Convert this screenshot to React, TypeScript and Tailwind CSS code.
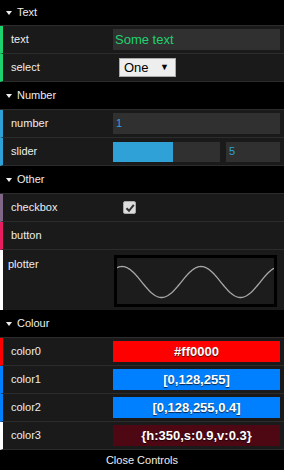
import React from "react";

const font = { fontFamily: '"Liberation Sans", Arial, sans-serif' };

const Header = ({ title, first }: { title: string; first?: boolean }) => (
  <div
    className={`flex items-center bg-black border-b border-[#2c2c2c] text-[11px] text-[#eeeeee] ${
      first ? "h-[26px]" : "h-[28px]"
    }`}
  >
    <span className="ml-[6px] mr-[5px] w-0 h-0 border-l-[3px] border-r-[3px] border-t-[4px] border-l-transparent border-r-transparent border-t-[#eeeeee]" />
    <span>{title}</span>
  </div>
);

const Row = ({
  label,
  border,
  children,
}: {
  label: string;
  border: string;
  children?: React.ReactNode;
}) => (
  <div
    className={`flex items-center h-[28px] bg-[#1a1a1a] border-b border-[#2c2c2c] border-l-[3px] ${border}`}
  >
    <div className="w-[110px] pl-[8px] text-[11px] text-[#eeeeee] leading-none">{label}</div>
    <div className="w-[167px] flex items-center">{children}</div>
  </div>
);

const ColorBox = ({ bg, text }: { bg: string; text: string }) => (
  <div
    className={`w-[167px] h-[21px] flex items-center justify-center text-[13px] font-bold text-white ${bg}`}
    style={{ textShadow: "0 1px 1px rgba(0,0,0,0.7)" }}
  >
    {text}
  </div>
);

const wavePoints = () => {
  const pts: string[] = [];
  for (let x = 0; x <= 157; x += 1) {
    const y = 24 - 15.5 * Math.cos((2 * Math.PI * (x - 5)) / 79);
    pts.push(`${x},${y.toFixed(2)}`);
  }
  return pts.join(" ");
};

export default function App() {
  return (
    <div className="w-[284px] h-[470px] bg-white overflow-hidden" style={font}>
      <Header title="Text" first />
      <Row label="text" border="border-l-[#1ed36f]">
        <div className="w-[167px] h-[21px] bg-[#303030] text-[13px] text-[#1ed36f] pl-[2px] flex items-center">
          Some text
        </div>
      </Row>
      <Row label="select" border="border-l-[#1ed36f]">
        <div className="ml-[6px] w-[57px] h-[19px] bg-[#eeeeee] border border-[#a9a9a9] flex items-center justify-between pl-[4px] pr-[6px] text-[13px] text-black">
          <span>One</span>
          <span className="text-[9px]">▼</span>
        </div>
      </Row>

      <Header title="Number" />
      <Row label="number" border="border-l-[#2fa1d6]">
        <div className="w-[167px] h-[21px] bg-[#303030] text-[11px] text-[#2fa1d6] pl-[3px] flex items-center">
          1
        </div>
      </Row>
      <Row label="slider" border="border-l-[#2fa1d6]">
        <div className="w-[107px] h-[20px] bg-[#303030] flex">
          <div className="w-[60px] h-full bg-[#2fa1d6]" />
        </div>
        <div className="ml-[6px] w-[54px] h-[20px] bg-[#303030] text-[11px] text-[#2fa1d6] pl-[3px] flex items-center">
          5
        </div>
      </Row>

      <Header title="Other" />
      <Row label="checkbox" border="border-l-[#806787]">
        <div className="ml-[10px] w-[13px] h-[13px] bg-[#dddddd] border border-[#aaaaaa] rounded-[2px] flex items-center justify-center">
          <svg width="10" height="10" viewBox="0 0 10 10">
            <path d="M1.5 5.2 L4 7.8 L8.8 1.8" stroke="#333" strokeWidth="2" fill="none" />
          </svg>
        </div>
      </Row>
      <Row label="button" border="border-l-[#e61d5f]" />
      <div className="flex h-[60px] bg-[#1a1a1a] border-l-[3px] border-l-white">
        <div className="w-[111px] pl-[5px] pt-[9px] text-[11px] text-[#eeeeee] leading-none">plotter</div>
        <div className="mt-[5px] w-[163px] h-[52px] border-[3px] border-black bg-[#1c1c1c]">
          <svg width="157" height="46" viewBox="0 0 157 46">
            <polyline points={wavePoints()} fill="none" stroke="#a8a8a8" strokeWidth="1.3" />
          </svg>
        </div>
      </div>

      <Header title="Colour" />
      <Row label="color0" border="border-l-[#ff0000]">
        <ColorBox bg="bg-[#ff0000]" text="#ff0000" />
      </Row>
      <Row label="color1" border="border-l-[#0080ff]">
        <ColorBox bg="bg-[#0080ff]" text="[0,128,255]" />
      </Row>
      <Row label="color2" border="border-l-[#0080ff]">
        <ColorBox bg="bg-[#0080ff]" text="[0,128,255,0.4]" />
      </Row>
      <Row label="color3" border="border-l-white">
        <ColorBox bg="bg-[#4d0814]" text="{h:350,s:0.9,v:0.3}" />
      </Row>

      <div className="h-[21px] bg-black flex items-center justify-center text-[11px] text-[#eeeeee]">
        Close Controls
      </div>
    </div>
  );
}
